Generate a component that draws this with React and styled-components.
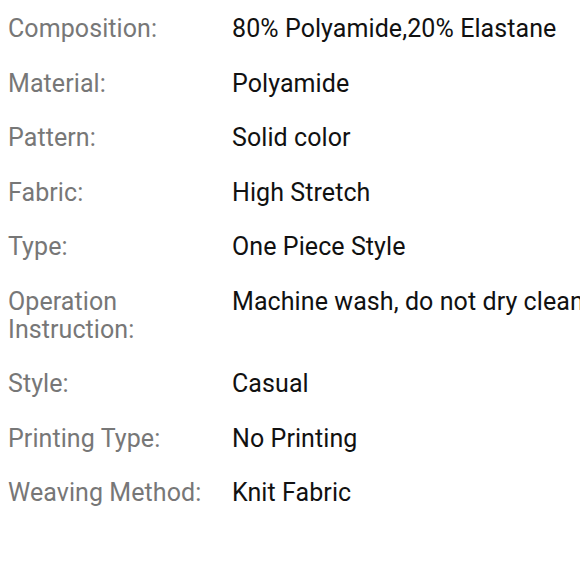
import React from "react";
import styled, { createGlobalStyle } from "styled-components";

const specs = [
  { label: "Composition:", value: "80% Polyamide,20% Elastane" },
  { label: "Material:", value: "Polyamide" },
  { label: "Pattern:", value: "Solid color" },
  { label: "Fabric:", value: "High Stretch" },
  { label: "Type:", value: "One Piece Style" },
  { label: "Operation Instruction:", value: "Machine wash, do not dry clean" },
  { label: "Style:", value: "Casual" },
  { label: "Printing Type:", value: "No Printing" },
  { label: "Weaving Method:", value: "Knit Fabric" },
];

const App = () => {
  return (
    <>
      <GlobalStyle />
      <SpecList>
        {specs.map((item) => (
          <SpecRow key={item.label}>
            <SpecLabel>{item.label}</SpecLabel>
            <SpecValue>{item.value}</SpecValue>
          </SpecRow>
        ))}
      </SpecList>
    </>
  );
};

export default App;

const GlobalStyle = createGlobalStyle`
  html, body {
    margin: 0;
    padding: 0;
    background: #ffffff;
    overflow: hidden;
  }
  body {
    font-family: Roboto, "Noto Sans", sans-serif;
  }
`;

const SpecList = styled.dl`
  margin: 0;
  padding: 15px 0 0 8px;
  display: flex;
  flex-direction: column;
  gap: 26.5px;
  width: 580px;
  box-sizing: border-box;
`;

const SpecRow = styled.div`
  display: grid;
  grid-template-columns: 224px 1fr;
  font-size: 25px;
  line-height: 28px;
  letter-spacing: 0.08px;
`;

const SpecLabel = styled.dt`
  margin: 0;
  color: #777777;
  padding-right: 12px;
`;

const SpecValue = styled.dd`
  margin: 0;
  color: #111111;
  white-space: nowrap;
`;
